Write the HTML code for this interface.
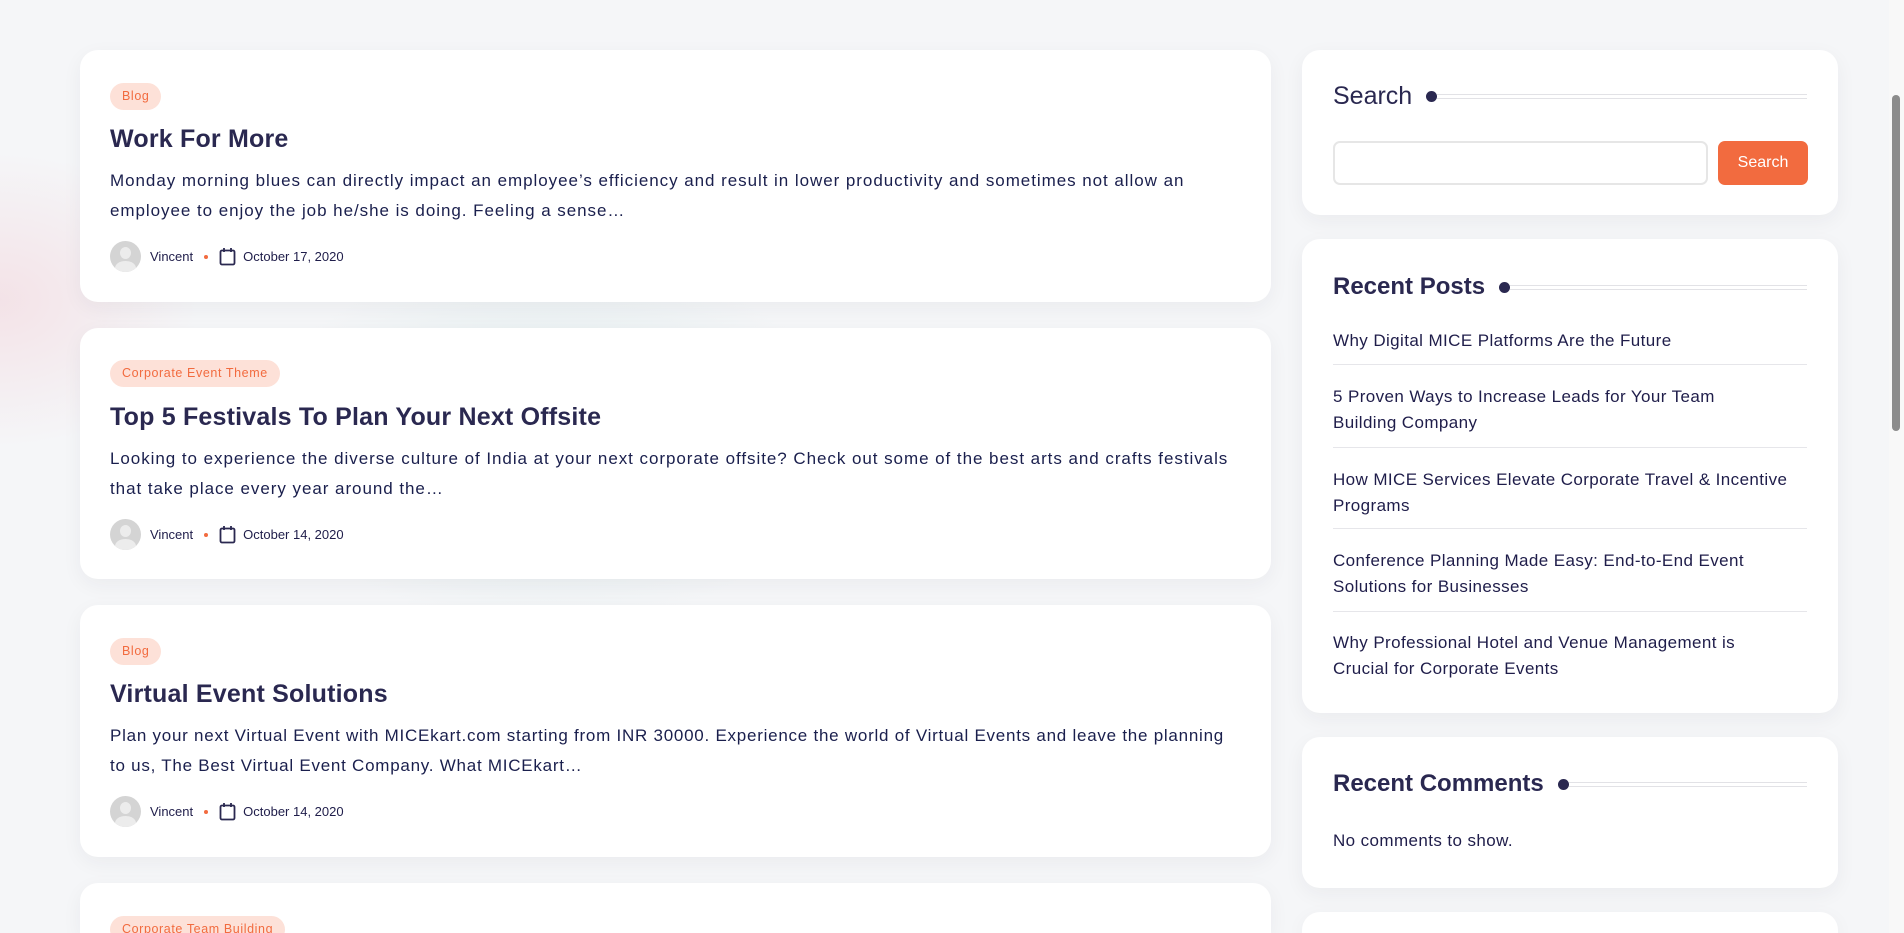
<!DOCTYPE html>
<html><head><meta charset="utf-8"><style>
*{box-sizing:border-box;margin:0;padding:0}
html,body{width:1904px;height:933px;overflow:hidden}
body{background:#f5f6f8;font-family:"Liberation Sans",sans-serif;color:#1f1d4a;position:relative}
.glow1{position:absolute;left:-200px;top:150px;width:400px;height:300px;background:radial-gradient(ellipse at center,rgba(240,190,200,.35),rgba(245,246,248,0) 70%)}
.glow2{position:absolute;left:250px;top:250px;width:600px;height:380px;background:radial-gradient(ellipse at center,rgba(200,225,225,.5),rgba(245,246,248,0) 70%)}
.card{position:absolute;left:80px;width:1191px;background:#fff;border-radius:18px;box-shadow:0 6px 20px rgba(30,30,60,.05);padding:0 30px;overflow:hidden}
.tag{position:absolute;left:30px;height:27px;line-height:27px;padding:0 12px;border-radius:14px;background:#fde1d8;color:#f26b3f;font-size:12.5px;letter-spacing:.6px}
.title{position:absolute;left:30px;font-size:25px;font-weight:bold;color:#2a2850;letter-spacing:.2px}
.ex{position:absolute;left:30px;font-size:17px;line-height:30px;color:#1a1f4d;letter-spacing:.95px;white-space:nowrap}
.meta{position:absolute;left:30px;display:flex;align-items:center;font-size:13px;color:#1f1d4a}
.av{width:31px;height:31px;border-radius:50%;background:#d4d4d4;position:relative;overflow:hidden;margin-right:9px}
.av:before{content:"";position:absolute;left:10px;top:6px;width:11px;height:12px;border-radius:50%;background:#ececec}
.av:after{content:"";position:absolute;left:5px;top:20px;width:21px;height:14px;border-radius:50%;background:#ececec}
.dot{width:4px;height:4px;border-radius:50%;background:#f26b3f;margin:0 11px}
.side{position:absolute;left:1302px;width:536px;background:#fff;border-radius:18px;box-shadow:0 6px 20px rgba(30,30,60,.05);overflow:hidden}
.h{position:absolute;left:31px;font-size:24px;font-weight:bold;color:#2a2850;display:flex;align-items:center;width:474px;white-space:nowrap}
.h i{display:block;width:11px;height:11px;border-radius:50%;background:#2a2850;margin-left:14px;flex:none}
.h b{display:block;flex:1;height:5px;border-top:1px solid #e2e2e6;border-bottom:1px solid #e2e2e6}
.rp{position:absolute;left:31px;width:480px;font-size:17px;line-height:26px;color:#1f1d4a;letter-spacing:.4px;white-space:nowrap}
.sep{position:absolute;left:31px;width:474px;height:1px;background:#e6e6ea}
.scroll{position:absolute;left:1889px;top:0;width:15px;height:933px;background:#f8f8f8}
.thumb{position:absolute;left:1892px;top:95px;width:8px;height:336px;border-radius:4px;background:#8c8c8c}
</style></head><body>
<div class="glow1"></div><div class="glow2"></div>

<div class="card" style="top:50px;height:252px">
<div class="tag" style="top:33px">Blog</div>
<div class="title" style="top:75px">Work For More</div>
<div class="ex" style="top:116px">Monday morning blues can directly impact an employee’s efficiency and result in lower productivity and sometimes not allow an<br>employee to enjoy the job he/she is doing. Feeling a sense…</div>
<div class="meta" style="top:191px"><div class="av"></div>Vincent<div class="dot"></div><svg width="17" height="19" viewBox="0 0 17 19"><rect x="1.5" y="3.5" width="14" height="14" rx="1.5" fill="none" stroke="#2a2850" stroke-width="1.8"/><path d="M5 1v4M12 1v4" stroke="#2a2850" stroke-width="1.8"/></svg><span style="margin-left:7px">October 17, 2020</span></div>
</div>

<div class="card" style="top:328px;height:251px">
<div class="tag" style="top:32px">Corporate Event Theme</div>
<div class="title" style="top:75px">Top 5 Festivals To Plan Your Next Offsite</div>
<div class="ex" style="top:116px">Looking to experience the diverse culture of India at your next corporate offsite? Check out some of the best arts and crafts festivals<br>that take place every year around the…</div>
<div class="meta" style="top:191px"><div class="av"></div>Vincent<div class="dot"></div><svg width="17" height="19" viewBox="0 0 17 19"><rect x="1.5" y="3.5" width="14" height="14" rx="1.5" fill="none" stroke="#2a2850" stroke-width="1.8"/><path d="M5 1v4M12 1v4" stroke="#2a2850" stroke-width="1.8"/></svg><span style="margin-left:7px">October 14, 2020</span></div>
</div>

<div class="card" style="top:605px;height:252px">
<div class="tag" style="top:33px">Blog</div>
<div class="title" style="top:75px">Virtual Event Solutions</div>
<div class="ex" style="top:116px;letter-spacing:.75px">Plan your next Virtual Event with MICEkart.com starting from INR 30000. Experience the world of Virtual Events and leave the planning<br>to us, The Best Virtual Event Company. What MICEkart…</div>
<div class="meta" style="top:191px"><div class="av"></div>Vincent<div class="dot"></div><svg width="17" height="19" viewBox="0 0 17 19"><rect x="1.5" y="3.5" width="14" height="14" rx="1.5" fill="none" stroke="#2a2850" stroke-width="1.8"/><path d="M5 1v4M12 1v4" stroke="#2a2850" stroke-width="1.8"/></svg><span style="margin-left:7px">October 14, 2020</span></div>
</div>

<div class="card" style="top:883px;height:50px;border-radius:18px 18px 0 0">
<div class="tag" style="top:33px">Corporate Team Building</div>
</div>

<div class="side" style="top:50px;height:165px">
<div class="h" style="top:32px;font-weight:normal;font-size:25px">Search<i></i><b></b></div>
<div style="position:absolute;left:31px;top:91px;width:375px;height:44px;border:2px solid #e6e6e6;border-radius:7px"></div>
<div style="position:absolute;left:416px;top:91px;width:90px;height:44px;border-radius:7px;background:#f26b3f;color:#fff;font-size:16px;text-align:center;line-height:44px">Search</div>
</div>

<div class="side" style="top:239px;height:474px">
<div class="h" style="top:34px">Recent Posts<i></i><b></b></div>
<div class="rp" style="top:89px">Why Digital MICE Platforms Are the Future</div>
<div class="sep" style="top:125px"></div>
<div class="rp" style="top:145px">5 Proven Ways to Increase Leads for Your Team<br>Building Company</div>
<div class="sep" style="top:208px"></div>
<div class="rp" style="top:228px">How MICE Services Elevate Corporate Travel &amp; Incentive<br>Programs</div>
<div class="sep" style="top:289px"></div>
<div class="rp" style="top:309px">Conference Planning Made Easy: End-to-End Event<br>Solutions for Businesses</div>
<div class="sep" style="top:372px"></div>
<div class="rp" style="top:391px">Why Professional Hotel and Venue Management is<br>Crucial for Corporate Events</div>
</div>

<div class="side" style="top:737px;height:151px">
<div class="h" style="top:33px">Recent Comments<i></i><b></b></div>
<div class="rp" style="top:91px">No comments to show.</div>
</div>

<div class="side" style="top:912px;height:21px;border-radius:18px 18px 0 0"></div>

<div class="scroll"></div><div class="thumb"></div>
</body></html>
